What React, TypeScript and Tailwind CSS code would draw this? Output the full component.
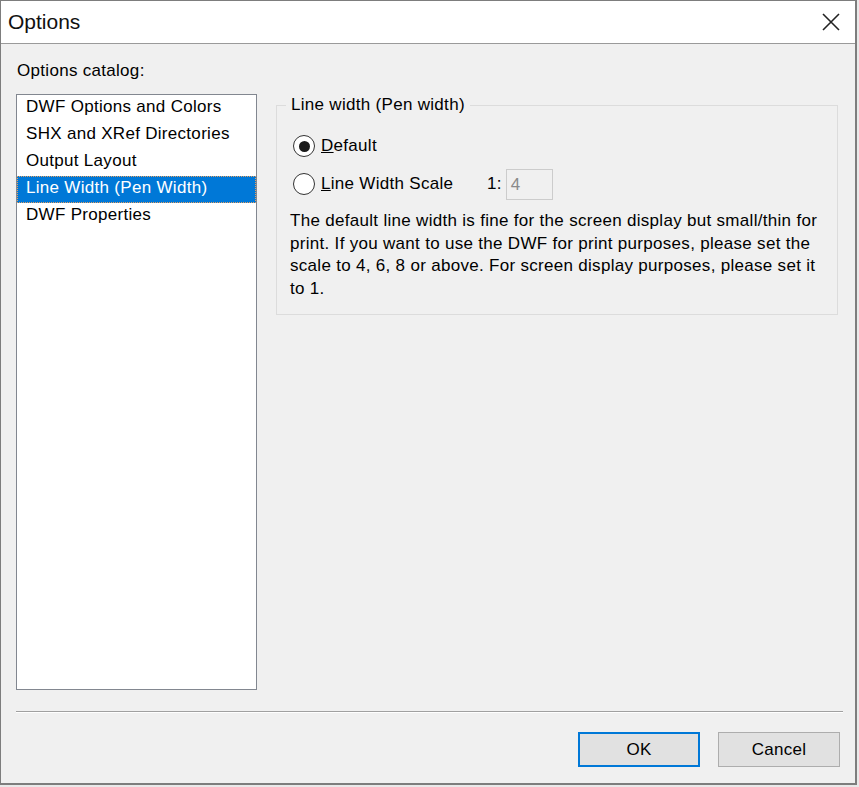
import React, { useState } from 'react';

const catalog = [
  'DWF Options and Colors',
  'SHX and XRef Directories',
  'Output Layout',
  'Line Width (Pen Width)',
  'DWF Properties',
];

// Win32 style radio button
const Radio = ({ checked }: { checked: boolean }) => (
  <span className="w-[22px] h-[22px] rounded-full border border-[#333] bg-white flex items-center justify-center shrink-0">
    {checked && <span className="w-[11px] h-[11px] rounded-full bg-[#1a1a1a]" />}
  </span>
);

export default function App() {
  const [selected, setSelected] = useState(3);
  const [mode, setMode] = useState<'default' | 'scale'>('default');

  return (
    <div
      className="w-[859px] h-[787px] bg-[#e9e9e9] text-[#000] overflow-hidden tracking-[0.3px]"
      style={{ fontFamily: '"Liberation Sans", Arial, sans-serif' }}
    >
      <div className="w-[857px] h-[785px] flex flex-col border-l border-r-2 border-b-2 border-t border-[#7d7d7d] bg-[#f0f0f0]">
        {/* Title bar */}
        <div className="h-[43px] bg-white border-b border-[#9a9a9a] flex items-center justify-between pl-[7px] pr-[14px] shrink-0">
          <span className="text-[21px] text-[#111] tracking-normal">Options</span>
          <svg width="20" height="20" viewBox="0 0 20 20" className="text-[#222]">
            <path d="M2 2 L18 18 M18 2 L2 18" stroke="currentColor" strokeWidth="1.6" fill="none" />
          </svg>
        </div>

        {/* Body */}
        <div className="flex-1 flex flex-col px-[15px] pt-[17px]">
          <div className="text-[17px] leading-[20px] pl-[1px]">Options catalog:</div>

          <div className="flex mt-[13px] gap-[19px]">
            {/* Catalog list */}
            <div className="w-[241px] h-[596px] bg-white border border-[#828790] shrink-0">
              {catalog.map((label, i) => (
                <div
                  key={label}
                  onClick={() => setSelected(i)}
                  className={`h-[27px] leading-[22px] pl-[8px] text-[17px] cursor-default border border-dotted ${
                    selected === i ? 'bg-[#0078d7] text-white border-[#e8a060]' : 'text-black border-transparent'
                  }`}
                >
                  {label}
                </div>
              ))}
            </div>

            {/* Group box */}
            <div className="flex-1 pt-[11px] pr-[2px]">
              <div className="relative border border-[#dcdcdc] h-[210px] pl-[16px] pr-[14px] pt-[21px]">
                <span className="absolute -top-[11px] left-[9px] px-[5px] bg-[#f0f0f0] text-[17px] leading-[20px]">
                  Line width (Pen width)
                </span>

                <label className="flex items-center gap-[6px] h-[38px] text-[17px]" onClick={() => setMode('default')}>
                  <Radio checked={mode === 'default'} />
                  <span><u>D</u>efault</span>
                </label>

                <label className="flex items-center gap-[6px] h-[36px] mt-[1px] text-[17px]" onClick={() => setMode('scale')}>
                  <Radio checked={mode === 'scale'} />
                  <span className="w-[160px]"><u>L</u>ine Width Scale</span>
                  <span>1:</span>
                  <span className="w-[47px] h-[31px] -ml-[2px] border border-[#cccccc] bg-[#f0f0f0] text-[#8a8a8a] pl-[4px] leading-[29px]">
                    4
                  </span>
                </label>

                <p className="mt-[8px] -ml-[3px] text-[17px] leading-[22.7px]">
                  The default line width is fine for the screen display but small/thin for print. If you want to use the DWF for print purposes, please set the scale to 4, 6, 8 or above. For screen display purposes, please set it to 1.
                </p>
              </div>
            </div>
          </div>

          {/* Separator */}
          <div className="h-[2px] -mr-[3px] border-t border-[#a0a0a0] border-b border-b-white mt-[21px]" />

          {/* Buttons */}
          <div className="flex justify-end gap-[18px] mt-[19px]">
            <button className="w-[122px] h-[35px] bg-[#e1e1e1] border-2 border-[#0078d7] text-[17px]">OK</button>
            <button className="w-[122px] h-[35px] bg-[#e1e1e1] border border-[#adadad] text-[17px]">Cancel</button>
          </div>
        </div>
      </div>
    </div>
  );
}
